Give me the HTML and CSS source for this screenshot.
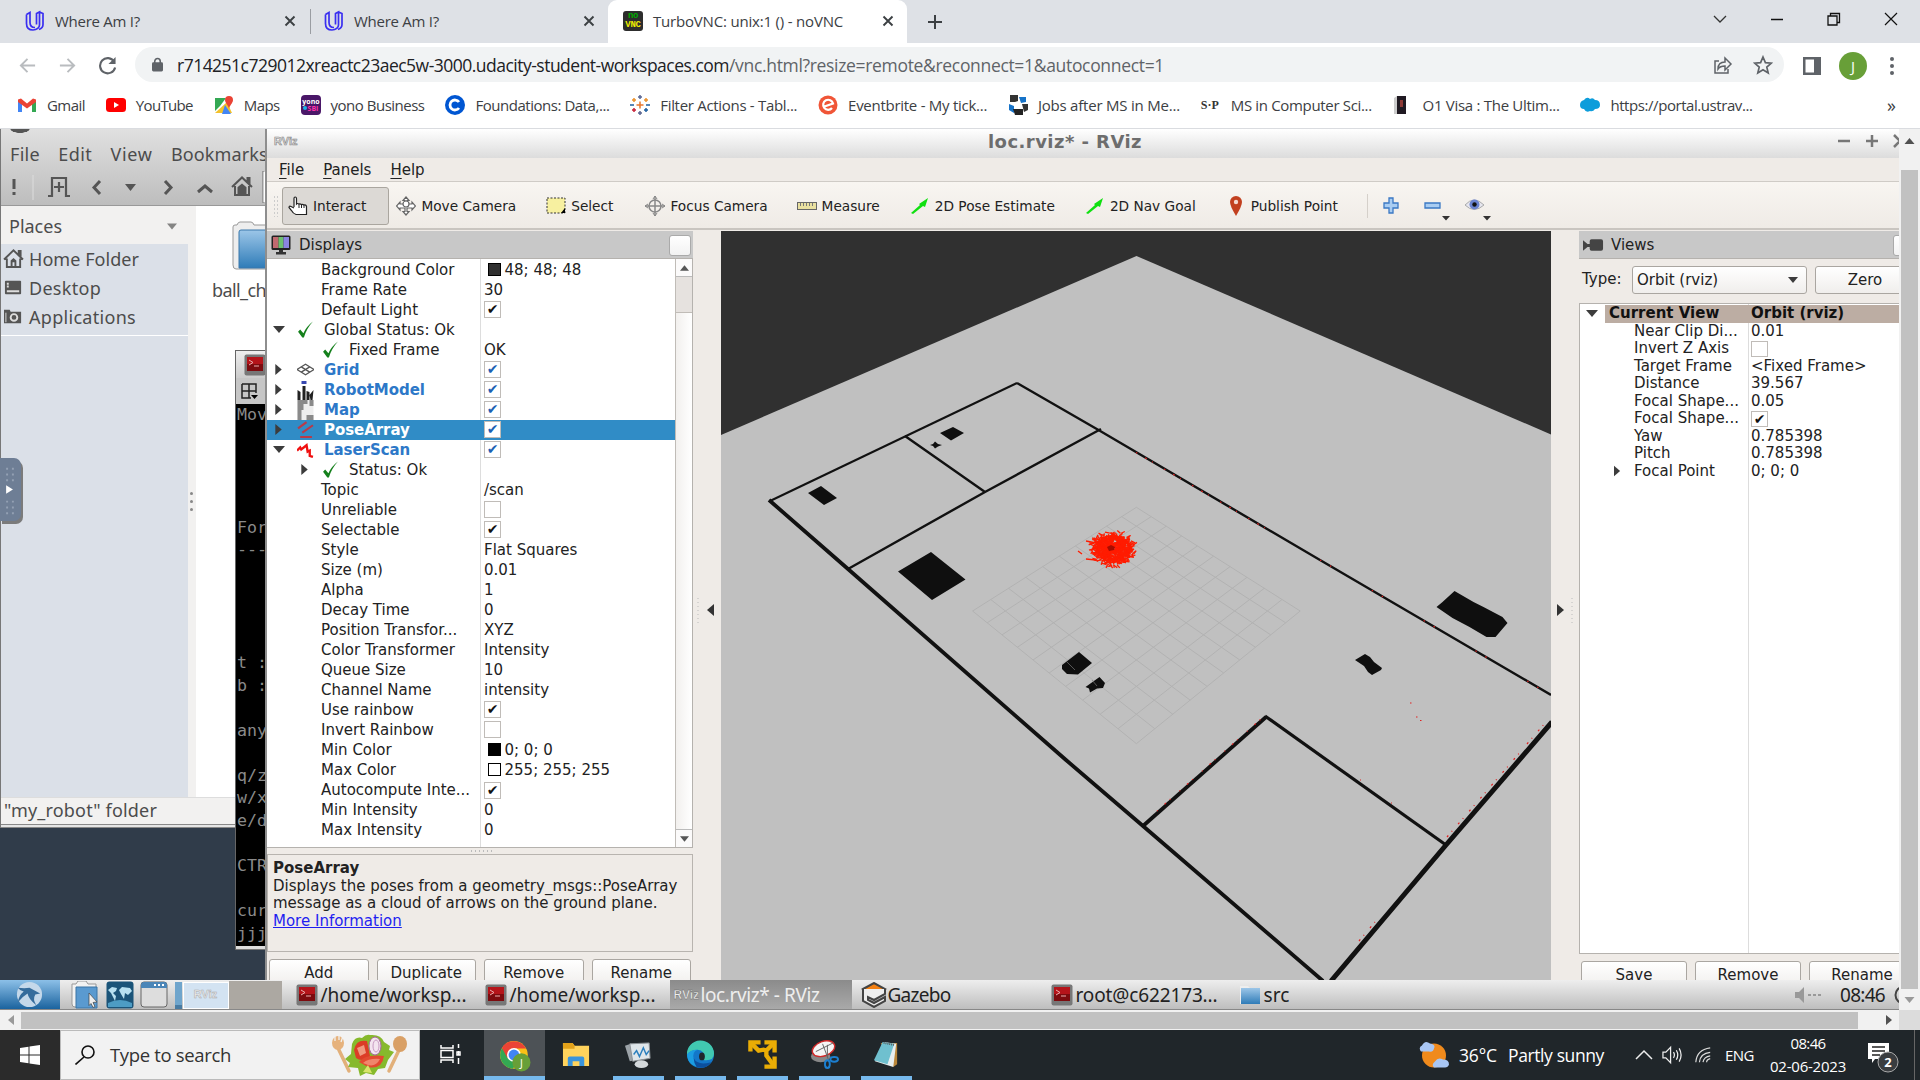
FILE: index.html
```html
<!DOCTYPE html>
<html lang="en">
<head>
<meta charset="utf-8">
<title>TurboVNC: unix:1 () - noVNC</title>
<link rel="stylesheet" href="styles.css">
</head>
<body>
<svg class="defs" width="0" height="0">
  <symbol id="uda" viewBox="0 0 20 22"><path d="M1.500 4.500v9c0 4 2.500 6.500 6.500 6.500s6.500-2.500 6.500-5V2L11.500 3.500v11M1.500 4.500L5 2.500v10c0 3.500 2 5 5 5M14.500 2l3.500 1.500v11c0 2-1 4-4 5" fill="none" stroke="#3a2ff0" stroke-width="1.700"/></symbol>
  <symbol id="x" viewBox="0 0 12 12"><path d="M1.500 1.500l9 9M10.500 1.500l-9 9" stroke="#3c4043" stroke-width="1.900"/></symbol>
  <symbol id="tick" viewBox="0 0 16 16"><path d="M1 10l2-2 3 3.500Q9 5 15 0.500 9 7 6.500 15.500H5Z" fill="#15801c"/></symbol>
  <symbol id="right" viewBox="0 0 8 12"><path d="M0 0l7 6-7 6z" fill="#3c3c3c"/></symbol>
  <symbol id="down" viewBox="0 0 12 7"><path d="M0 0h12l-6 7z" fill="#3c3c3c"/></symbol>
  <symbol id="home" viewBox="0 0 22 20"><path d="M1 11L11 1.500 21 11M4 10v9h14v-9M16.500 6V2h2v6" fill="none" stroke="#555" stroke-width="2"/><path d="M8 12l3-2.500 3 2.500v2H8zM8 14h2v4H8zM12 14h2v4h-2z" fill="#555"/></symbol>
  <symbol id="term" viewBox="0 0 22 22"><rect x=".5" y=".5" width="21" height="21" rx="2" fill="#777"/><rect x="3" y="3" width="16" height="14" fill="#b5141a"/><path d="M3 10h16v7H3z" fill="#7d0b0f"/><path d="M5 6l4 2.500L5 11M10 12h5" stroke="#e9b0b0" fill="none"/></symbol>
  <symbol id="folder" viewBox="0 0 34 50"><path d="M1 6q0-2 2-2h2q1-3 3-3h11q2 0 3 3h12v44H4q-3 0-3-4z" fill="#eee" stroke="#999"/><path d="M7 11q0-2 2-2h25v38H7z" fill="url(#fg)" stroke="#3a78ac"/></symbol>
  <linearGradient id="fg" x1="0" y1="0" x2="0" y2="1"><stop offset="0" stop-color="#9cc6e8"/><stop offset="1" stop-color="#2f7cb8"/></linearGradient>
  <symbol id="arrow2d" viewBox="0 0 20 20"><path d="M1 17L10 9 9 8l9-6-3 9-2-1L3 18z" fill="#10e010"/></symbol>
</svg>

<header class="tabs">
  <div class="tab"><svg class="fav"><use href="#uda"/></svg><span class="lbl" data-w="85">Where Am I?</span><svg class="close"><use href="#x"/></svg></div>
  <div class="tab bar"><svg class="fav"><use href="#uda"/></svg><span class="lbl" data-w="85">Where Am I?</span><svg class="close"><use href="#x"/></svg></div>
  <div class="tab active"><span class="novnc"><i>no</i><b>VNC</b></span><span class="lbl" data-w="190">TurboVNC: unix:1 () - noVNC</span><svg class="close"><use href="#x"/></svg></div>
  <svg class="plus" viewBox="0 0 16 16"><path d="M8 1v14M1 8h14" stroke="#3c4043" stroke-width="2"/></svg>
  <div class="winctl">
    <svg viewBox="0 0 14 14"><path d="M1 4l6 6 6-6" fill="none" stroke="#333" stroke-width="1.300"/></svg>
    <svg viewBox="0 0 14 14"><path d="M1 7.500h12" stroke="#111" stroke-width="1.500"/></svg>
    <svg viewBox="0 0 14 14"><path d="M1 4h9v9H1zM3.500 4V1.500h9v9H10" fill="none" stroke="#111" stroke-width="1.300"/></svg>
    <svg viewBox="0 0 14 14"><path d="M1 1l12 12M13 1L1 13" stroke="#111" stroke-width="1.200"/></svg>
  </div>
</header>
<nav class="toolbar">
  <svg class="nav" viewBox="0 0 20 20"><path d="M18 10H3M10 3l-7 7 7 7" fill="none" stroke="#b9bcbf" stroke-width="2"/></svg>
  <svg class="nav" viewBox="0 0 20 20"><path d="M2 10h15M10 3l7 7-7 7" fill="none" stroke="#b9bcbf" stroke-width="2"/></svg>
  <svg class="nav" viewBox="0 0 20 20"><path d="M17 6A8 8 0 1 0 18 12" fill="none" stroke="#5f6368" stroke-width="2.200"/><path d="M18.500 1v7.500H11z" fill="#5f6368"/></svg>
  <div class="omnibox">
    <svg class="lock" viewBox="0 0 12 15"><rect y="5" width="12" height="10" rx="1.500" fill="#5f6368"/><path d="M3 6V4a3 3 0 0 1 6 0v2" fill="none" stroke="#5f6368" stroke-width="1.700"/></svg>
    <span class="url host" data-w="552">r714251c729012xreactc23aec5w-3000.udacity-student-workspaces.com</span><span class="url" data-w="435">/vnc.html?resize=remote&amp;reconnect=1&amp;autoconnect=1</span>
    <svg class="share" viewBox="0 0 20 20"><path d="M6 6H2v12h13v-4M5 14c0-5 3-7 7-7V3l6 6-6 6v-4c-3 0-5 0-7 3z" fill="none" stroke="#5f6368" stroke-width="1.500"/></svg>
    <svg class="star" viewBox="0 0 20 20"><path d="M10 2l2.400 5.600 6 .5-4.600 4 1.400 5.900L10 14.800 4.800 18l1.400-5.900-4.600-4 6-.5z" fill="none" stroke="#5f6368" stroke-width="1.700"/></svg>
  </div>
  <svg class="side" viewBox="0 0 18 18"><path d="M0 0h18v18H0zM2.500 2.500v13H11v-13z" fill="#5f6368" fill-rule="evenodd"/></svg>
  <span class="avatar">J</span>
  <svg class="more" viewBox="0 0 4 18"><circle cx="2" cy="2" r="2"/><circle cx="2" cy="9" r="2"/><circle cx="2" cy="16" r="2"/></svg>
</nav>
<nav class="marks">
  <a><svg viewBox="0 0 20 20"><path d="M1 17V5l4 3v9z" fill="#4285f4"/><path d="M15 17V8l4-3v12z" fill="#34a853"/><path d="M1 4.500l3-1 6 5 6-5 3 1V7l-9 6.500L1 7z" fill="#ea4335"/></svg><span data-w="38">Gmail</span></a>
  <a><svg viewBox="0 0 20 20"><rect y="3" width="20" height="14" rx="3.500" fill="#f00"/><path d="M8 7l5 3-5 3z" fill="#fff"/></svg><span data-w="57">YouTube</span></a>
  <a><svg viewBox="0 0 20 20"><path d="M1 3h11l-6 8-5 5z" fill="#34a853"/><path d="M1 18L13 7l5 11z" fill="#f3c12c"/><path d="M11 10l6 9h-9z" fill="#4285f4"/><path d="M15 1a4 4 0 0 1 4 4c0 3-4 6-4 9 0-3-4-6-4-9a4 4 0 0 1 4-4z" fill="#ea4335"/></svg><span data-w="36">Maps</span></a>
  <a><svg viewBox="0 0 20 20"><rect width="20" height="20" rx="4" fill="#4a1768"/><text x="10" y="9" class="tiny" fill="#fff">yono</text><text x="12" y="16" class="tiny" fill="#f3a">SBI</text><circle cx="4" cy="13" r="2" fill="#1cb3e8"/></svg><span data-w="94">yono Business</span></a>
  <a><svg viewBox="0 0 20 20"><circle cx="10" cy="10" r="10" fill="#0056d2"/><path d="M14 7a5 5 0 1 0 0 6" fill="none" stroke="#fff" stroke-width="2.800"/></svg><span data-w="134">Foundations: Data,...</span></a>
  <a><svg viewBox="0 0 20 20" fill="none" stroke-width="1.500"><path d="M10 6.500v7M6.500 10h7" stroke="#e8762c"/><path d="M10 0v4M8 2h4M10 16v4M8 18h4" stroke="#5a6591"/><path d="M4 3v4M2 5h4M16 3v4M14 5h4" stroke="#eb912c"/><path d="M4 13v4M2 15h4" stroke="#c72037"/><path d="M16 13v4M14 15h4M0 10h4M16 10h4" stroke="#1f5fa0"/></svg><span data-w="137">Filter Actions - Tabl...</span></a>
  <a><svg viewBox="0 0 20 20"><circle cx="10" cy="10" r="9.500" fill="#f05537"/><path d="M5 12l10-3.500A5 5 0 1 0 14 13" fill="none" stroke="#fff" stroke-width="2.200"/></svg><span data-w="139">Eventbrite - My tick...</span></a>
  <a><svg viewBox="0 0 20 20"><path d="M2 0h8v6l-3 1H2z" fill="#333"/><path d="M11 2h7v5l-5 1z" fill="#1673c8"/><path d="M1 9l5 2v7l-5-3z" fill="#1673c8"/><path d="M14 9h6v6l-4 2z" fill="#333"/><path d="M5 14h10v6H7z" fill="#222"/></svg><span data-w="142">Jobs after MS in Me...</span></a>
  <a><span class="sp">S·P</span><span data-w="141">MS in Computer Sci...</span></a>
  <a><svg viewBox="0 0 20 20"><path d="M1 3l3-2v18H1z" fill="#ccc"/><path d="M4 1h9v18H4z" fill="#201a22"/><path d="M7 5h3v7H7z" fill="#8d3a36"/></svg><span data-w="137">O1 Visa : The Ultim...</span></a>
  <a><svg viewBox="0 0 20 20"><path d="M4 5q3-4 6-1 3-2 5 1 5 0 5 5 0 4-5 4-2 3-5 2-4 2-6-2-4 0-4-4 0-4 4-5z" fill="#0d9ddb"/></svg><span data-w="142">https://portal.ustrav...</span></a>
  <span class="over">»</span>
</nav>

<main class="vnc">
  <div class="desktop">
    <section class="fm">
      <div class="fm-top">
        <div class="fm-menu"><span data-w="30">File</span><span data-w="34">Edit</span><span data-w="42">View</span><span data-w="97">Bookmarks</span></div>
        <svg class="fm-tools" viewBox="0 0 266 39" fill="none" stroke="#555" stroke-width="3">
          <path d="M14 12v10M14 25v3"/><path d="M33 8v25" stroke="#ddd" stroke-width="1"/>
          <path d="M48 29h4V11h14v18h4M59 15v10M54 20h10" stroke-width="2.200"/>
          <path d="M100 14l-6 6.500 6 6.500M165 14l6 6.500-6 6.500M198 25l7-6 7 6"/><path d="M125 17h11l-5.500 7z" fill="#555" stroke="none"/>
          <use href="#home" x="231" y="9" width="22" height="20"/><path d="M263 4v32" stroke="#999" stroke-width="2"/><path d="M265 5v30" stroke="#fff"/></svg>
      </div>
      <div class="fm-mid">
        <aside class="places">
          <h4><span data-w="53">Places</span><svg class="pd"><use href="#down"/></svg></h4>
          <ul>
            <li><svg viewBox="0 0 22 20"><use href="#home" width="22" height="20"/></svg><span data-w="110">Home Folder</span></li>
            <li><svg viewBox="0 0 22 20"><rect x="2" y="3" width="17" height="14" rx="1" fill="#555"/><path d="M4 5h2v2H4zM4 8h2v2H4zM4 13h13v2H4z" fill="#ddd"/></svg><span data-w="72">Desktop</span></li>
            <li><svg viewBox="0 0 22 20"><path d="M1 16V3h6l1 2h11v12H1z" fill="#555"/><circle cx="11.500" cy="11" r="3.500" fill="none" stroke="#ddd" stroke-width="2"/><path d="M3 6v10" stroke="#ddd"/></svg><span data-w="107">Applications</span></li>
          </ul>
        </aside>
        <div class="fm-split"><i></i><i></i><i></i></div>
        <div class="files"><svg class="bigfolder"><use href="#folder"/></svg><span data-w="54">ball_ch</span></div>
      </div>
      <div class="fm-status"><span data-w="153">"my_robot" folder</span></div>
      <div class="fm-foot"></div>
    </section>

    <section class="terminal">
      <div class="t-title"><svg viewBox="0 0 22 22"><use href="#term" width="22" height="22"/></svg></div>
      <div class="t-bar"><svg viewBox="0 0 18 18"><path d="M1 1h14v9M1 1v14h9M8 1v14M1 8h14" fill="none" stroke="#222" stroke-width="1.500"/><path d="M10 12h7l-3.500 4z"/></svg></div>
      <pre>Mov




For
---




t :
b :

any

q/z
w/x
e/d

CTR

cur
jjj</pre>
      <div class="t-foot"></div>
    </section>

    <section class="rviz">
      <div class="r-title"><span class="logo">RViz</span><h1 data-w="154">loc.rviz* - RViz</h1><span class="r-ctl"><svg viewBox="0 0 80 20"><path d="M2 10h12M30 10h12M36 4v12M58 4l6 6-6 6" fill="none" stroke="#777" stroke-width="2.500"/></svg></span></div>
      <div class="r-menu"><span><u>F</u>ile</span><span><u>P</u>anels</span><span><u>H</u>elp</span></div>
      <div class="r-tools">
        <i class="grip"></i>
        <span class="tool on"><svg viewBox="0 0 20 20"><path d="M6 11V2.500q0-1.500 1.200-1.500T8.500 2.500V8q1-1 2.500 0 1-.5 2.500.5 1.200-.5 2.500.5 2-.5 2.500 1.500v8H8q-3-1-4.500-4L1 11.500q0-2 2-1L6 12" fill="#fff" stroke="#222" stroke-width="1.200"/><path d="M11 8v4M13.500 8.500V12M16 9v3" stroke="#222"/></svg>Interact</span>
        <span class="tool"><svg viewBox="0 0 20 20" fill="#fff" stroke="#666" stroke-width="1.200"><path d="M10 1l3 3.500h-2V8h5V6l3.500 4-3.500 4v-2h-5v3.500h2L10 19l-3-3.500h2V12H4v2L.5 10 4 6v2h5V4.500H7z"/><circle cx="10" cy="8" r="3"/></svg>Move Camera</span>
        <span class="tool"><svg viewBox="0 0 20 20"><rect x="1" y="2" width="18" height="15" fill="#f7f0a0" stroke="#333" stroke-dasharray="2 1.500"/><path d="M19 12v5h-4z"/></svg>Select</span>
        <span class="tool focus"><svg viewBox="0 0 20 20" fill="none" stroke="#888" stroke-width="1.500"><circle cx="10" cy="10" r="6"/><path d="M10 0v20M0 10h20"/><path d="M8 3l2-3 2 3M8 17l2 3 2-3M3 8l-3 2 3 2M17 8l3 2-3 2" stroke-width="1"/></svg>Focus Camera</span>
        <span class="tool"><svg viewBox="0 0 20 20"><rect x=".5" y="6.500" width="19" height="7" fill="#e9e0a0" stroke="#666"/><path d="M3.500 7v3M6.500 7v3M9.500 7v3M12.500 7v3M15.500 7v3" stroke="#777"/></svg>Measure</span>
        <span class="tool"><svg viewBox="0 0 20 20"><use href="#arrow2d" width="20" height="20"/></svg>2D Pose Estimate</span>
        <span class="tool"><svg viewBox="0 0 20 20"><use href="#arrow2d" width="20" height="20"/></svg>2D Nav Goal</span>
        <span class="tool"><svg viewBox="0 0 20 20"><path d="M10 0a6 6 0 0 1 6 6q0 4-6 14Q4 10 4 6a6 6 0 0 1 6-6z" fill="#c2401f"/><circle cx="10" cy="6" r="2.200" fill="#f3d9d0"/></svg>Publish Point</span>
        <i class="vsep"></i>
        <svg class="extras" viewBox="0 0 116 36"><path d="M6 10h4v5h5v5h-5v5H6v-5H1v-5h5zM42 15h15v5H42z" fill="#a9cdf2" stroke="#3a78c4" stroke-width="1.300"/><path d="M59 28h8l-4 4.500zM100 28h8l-4 4.500z" fill="#333"/><path d="M82 17q9-10 19 0-10 9-19 0z" fill="#e6e6ee" stroke="#aaa"/><circle cx="91.500" cy="16.500" r="5" fill="#6a83d0"/><circle cx="91.500" cy="16.500" r="2.200" fill="#111"/></svg>
      </div>
      <div class="r-body">
        <div class="dock">
          <div class="d-head"><svg viewBox="0 0 20 20"><rect x=".5" y=".5" width="19" height="14.500" rx="1.500" fill="#222"/><path d="M2 2h5.500v11H2z" fill="#c06a70"/><path d="M7.500 2h5v11h-5z" fill="#6cc070"/><path d="M12.500 2H18v11h-5.500z" fill="#8a84e0"/><path d="M8 15h4v2h3v2.500H5V17h3z" fill="#333"/></svg>Displays<i class="sq"></i></div>
          <div class="treebox">
            <div class="tree">
              <p class="l1">Background Color<b><s class="dk"></s>48; 48; 48</b></p>
              <p class="l1">Frame Rate<b>30</b></p>
              <p class="l1">Default Light<b><i class="cb on">✔</i></b></p>
              <p class="top"><svg class="ar"><use href="#down"/></svg><svg class="ic"><use href="#tick"/></svg>Global Status: Ok<b></b></p>
              <p class="sub"><svg class="ar"></svg><svg class="ic"><use href="#tick"/></svg>Fixed Frame<b>OK</b></p>
              <p class="top d"><svg class="ar"><use href="#right"/></svg><svg class="ic" viewBox="0 0 16 16"><path d="M0 8l8-5 8 5-8 5zM4 5.500l8 5M12 5.500l-8 5" fill="none" stroke="#555" stroke-width="1.200"/></svg>Grid<b><i class="cb on bl">✔</i></b></p>
              <p class="top d"><svg class="ar"><use href="#right"/></svg><svg class="ic tall" viewBox="0 0 16 20"><path d="M4 1h5v3H4z" fill="#3848b0"/><path d="M0 10l3 2v8H0zM5 6h3v14H5zM9 11l3 1v8H9zM12 15l4-5-1 10h-2z" fill="#222"/></svg>RobotModel<b><i class="cb on bl">✔</i></b></p>
              <p class="top d"><svg class="ar"><use href="#right"/></svg><svg class="ic tall" viewBox="0 0 16 20"><path d="M0 0h16v20H0z" fill="#eee"/><path d="M0 0h10v4H6v6H4v10H0zM9 15h7v5H9zM12 0h4v6h-4z" fill="#8a8a8a"/></svg>Map<b><i class="cb on bl">✔</i></b></p>
              <p class="top d sel"><svg class="ar"><use href="#right"/></svg><svg class="ic" viewBox="0 0 16 16"><path d="M1 7l8-6M5 11l10-7M3 15h11" stroke="#b83a48" stroke-width="2"/></svg>PoseArray<b><i class="cb on bl">✔</i></b></p>
              <p class="top d"><svg class="ar"><use href="#down"/></svg><svg class="ic" viewBox="0 0 16 16"><path d="M0 9l3-3 1 2 5-4 1 6 2-1v5l3 1" fill="none" stroke="#f01010" stroke-width="2.200"/></svg>LaserScan<b><i class="cb on bl">✔</i></b></p>
              <p class="sub"><svg class="ar"><use href="#right"/></svg><svg class="ic"><use href="#tick"/></svg>Status: Ok<b></b></p>
              <p class="l1">Topic<b>/scan</b></p>
              <p class="l1">Unreliable<b><i class="cb"></i></b></p>
              <p class="l1">Selectable<b><i class="cb on">✔</i></b></p>
              <p class="l1">Style<b>Flat Squares</b></p>
              <p class="l1">Size (m)<b>0.01</b></p>
              <p class="l1">Alpha<b>1</b></p>
              <p class="l1">Decay Time<b>0</b></p>
              <p class="l1">Position Transfor...<b>XYZ</b></p>
              <p class="l1">Color Transformer<b>Intensity</b></p>
              <p class="l1">Queue Size<b>10</b></p>
              <p class="l1">Channel Name<b>intensity</b></p>
              <p class="l1">Use rainbow<b><i class="cb on">✔</i></b></p>
              <p class="l1">Invert Rainbow<b><i class="cb"></i></b></p>
              <p class="l1">Min Color<b><s class="bk"></s>0; 0; 0</b></p>
              <p class="l1">Max Color<b><s></s>255; 255; 255</b></p>
              <p class="l1">Autocompute Inte...<b><i class="cb on">✔</i></b></p>
              <p class="l1">Min Intensity<b>0</b></p>
              <p class="l1">Max Intensity<b>0</b></p>
            </div>
            <div class="tscroll"><span><svg viewBox="0 0 10 6"><path d="M0 6l5-6 5 6z" fill="#555"/></svg></span><em></em><span class="dn"><svg viewBox="0 0 10 6"><path d="M0 0l5 6 5-6z" fill="#555"/></svg></span></div>
          </div>
          <div class="hdots"></div>
          <div class="desc"><strong>PoseArray</strong><br>Displays the poses from a geometry_msgs::PoseArray<br>message as a cloud of arrows on the ground plane.<br><a>More Information</a></div>
          <div class="btns"><span>Add</span><span>Duplicate</span><span>Remove</span><span>Rename</span></div>
        </div>
        <div class="gut"><svg viewBox="0 0 28 40"><path d="M5 8v26" stroke="#bbb" stroke-dasharray="1 3"/><path d="M21 14v12l-7-6z" fill="#333"/></svg></div>
        <svg class="view3d" viewBox="721 231 830 749">
          <rect x="721" y="231" width="830" height="749" fill="#303030"/>
          <path d="M721 435L1136.500 256 1551 434.500V980H721z" fill="#c0c0c0"/>
          <g id="grid" stroke="#b2b2b2" stroke-width="1"></g>
          <g fill="none" stroke="#111">
            <path d="M770 501L1017 383" stroke-width="2"/>
            <path d="M1017 383l81.500 47L1320 560l231 135" stroke-width="2.400"/>
            <path d="M905 436l80 56M1101 429L985 492 848 569" stroke-width="2.400"/>
            <path d="M769 500l79 69 218 191 77 66 180 155" stroke-width="3.800"/>
            <path d="M1143 826l123-109" stroke-width="3.800"/><path d="M1265 716l181 129" stroke-width="3.200"/>
            <path d="M1331 981l115-136 106-123" stroke-width="5"/>
          </g>
          <g fill="#0f0f0f">
            <path d="M940 433l13-6 11 6-13 7.500zM930 445l3-1 2-2.500 3 2.500 4 1-4 1.500-3 2-2-2.500zM808 493l13-7 16 12-13 7zM898 571.500L931 552l34.500 27.500L932 600zM1062 665l17-13 13 11-14 11.500-11-.5-5-5zM1085.500 687l14-10 5.500 6-2 5-6 .5-7 4-1-4z"/>
            <path d="M1436.500 607l6-5 12-11 19 11 10 5 19 10 5 6-12 14h-9l-17-10-17-9zM1355 660l10-6 5 3 4 5 8 6-1 2-9 5-4-3-4-6z"/>
          </g>
          <path d="M1066 661l9 9M1092 680l5 6" stroke="#777" fill="none" stroke-width=".7"/>
          <g id="poses" stroke="#ff1c00" stroke-width="1.300"></g>
          <path d="M1107 547l4-2 4 2-1 3-5 1z" fill="#a80c00"/>
          <g fill="none" stroke="#e02020" stroke-width="1.200">
            <path d="M1136 452.500L1270 531" stroke-dasharray="1.500 9 2 6 1 13"/><path d="M1320 560L1551 695" stroke-dasharray="1.500 10 1.500 47"/><path d="M1157 811l104-92" stroke-dasharray="1 9 2 5 1 12"/>
            <path d="M1360 942l16-19M1448 838l75-87M1528 745l18-21" stroke-dasharray="2 5 1 9" transform="translate(-1 -1)"/>
            <path d="M1410 703h1.500M1416 717h1.500M1420 720.500h1.500M1360 780h1M1391 803h1"/>
          </g>
        </svg>
        <div class="gut"><svg viewBox="0 0 28 40"><path d="M6 14v12l7-6z" fill="#333"/><path d="M21 8v26" stroke="#bbb" stroke-dasharray="1 3"/></svg></div>
        <div class="views">
          <div class="d-head"><svg viewBox="0 0 22 20"><path d="M0 5l6 5v1l-6 5zM5 9h3v3H5zM7 6q0-2 2-2h10q2 0 2 2v8q0 2-2 2H9q-2 0-2-2z" fill="#444"/></svg>Views<i class="sq"></i></div>
          <div class="typerow"><span>Type:</span><span class="combo">Orbit (rviz)<svg class="cd"><use href="#down"/></svg></span><span class="zero">Zero</span></div>
          <div class="vtree">
            <p class="cur"><svg class="ar"><use href="#down"/></svg><strong>Current View</strong><b>Orbit (rviz)</b></p>
            <p>Near Clip Di...<b>0.01</b></p>
            <p>Invert Z Axis<b><i class="cb"></i></b></p>
            <p>Target Frame<b>&lt;Fixed Frame&gt;</b></p>
            <p>Distance<b>39.567</b></p>
            <p>Focal Shape...<b>0.05</b></p>
            <p>Focal Shape...<b><i class="cb on">✔</i></b></p>
            <p>Yaw<b>0.785398</b></p>
            <p>Pitch<b>0.785398</b></p>
            <p class="exp"><svg class="ar"><use href="#right"/></svg>Focal Point<b>0; 0; 0</b></p>
          </div>
          <div class="btns"><span>Save</span><span>Remove</span><span>Rename</span></div>
        </div>
      </div>
    </section>

    <div class="handle"><svg viewBox="0 0 20 65"><path d="M7 10v15M13 10v15M7 44v15M13 44v15" stroke="#93a0b3" stroke-width="2" stroke-dasharray="2 4"/><path d="M6 28l7 4.500L6 37z" fill="#fff"/></svg></div>

    <footer class="lx">
      <span class="lxstart"><svg viewBox="0 0 30 30"><circle cx="15" cy="15" r="13" fill="#c4d8ea"/><path d="M3 8q7 1 12 0l11 6-5 1q-3 5 1 11-8-6-9-12-5 3-10 9 1-7 6-11-4-1-6-4z" fill="#356c9c"/></svg></span>
      <svg class="lxi" viewBox="0 0 28 28"><path d="M1 3h4l2-3h8l2 3h8v23H4q-3 0-3-3z" fill="#f2f2f2" stroke="#999"/><path d="M5 6h21v21H5z" fill="#5a9ad0" stroke="#3b74a5"/><path d="M18 12l8 9-4 .5 2 4-2 1-2-4-2 2z" fill="#eee" stroke="#444" stroke-width=".7"/></svg>
      <svg class="lxi" viewBox="0 0 28 28"><rect x=".5" y=".5" width="27" height="27" rx="3" fill="#1b5479"/><path d="M2 22q12-6 24 0v4H2z" fill="#4d9cc4"/><path d="M2 9l4-3 5 1-1 3-3 2 3 3-1 5-2-4-2-4zM13 9l3-3 8 1 2 3-4 4-3-2-1 6-3-5z" fill="#b8e0f0"/></svg>
      <svg class="lxi" viewBox="0 0 28 28"><rect x="1" y="1" width="26" height="25" rx="3" fill="#ddd" stroke="#666"/><path d="M1 7V4q0-3 3-3h20q3 0 3 3v3z" fill="#4b86b8"/><path d="M14 4h2M18 4h2M22 4h2" stroke="#fff" stroke-width="2"/></svg>
      <span class="pager"><i></i><em>RViz</em></span><span class="pager2"></span>
      <span class="task t1"><svg><use href="#term"/></svg><span data-w="146">/home/worksp...</span></span>
      <span class="task t2"><svg><use href="#term"/></svg><span data-w="146">/home/worksp...</span></span>
      <span class="task act"><em>RViz</em><span data-w="119">loc.rviz* - RViz</span></span>
      <span class="task t4"><svg viewBox="0 0 26 26"><path d="M2 7l11-6 11 6-11 6z" fill="#f58113" stroke="#444" stroke-width="2"/><path d="M2 7v12l11 6 11-6v-4l-11 6-6-3v-3l6 3 11-6v-5" fill="#eee" stroke="#444" stroke-width="2"/></svg><span data-w="63">Gazebo</span></span>
      <span class="task t5"><svg><use href="#term"/></svg><span data-w="142">root@c622173...</span></span>
      <span class="task t6"><svg viewBox="0 0 22 22"><path d="M1 2h8l2 2h10v16H1z" fill="#eee"/><rect x="2" y="4" width="19" height="16" fill="url(#fg)"/></svg><span data-w="26">src</span></span>
      <span class="tray"><svg viewBox="0 0 27 20"><path d="M0 7h4l5-5v16l-5-5H0z" fill="#999"/><path d="M13 10h13" stroke="#999" stroke-width="2" stroke-dasharray="3 2"/></svg><span data-w="45">08:46</span><svg class="pw" viewBox="0 0 20 20"><circle cx="10" cy="10" r="8.500" fill="none" stroke="#444" stroke-width="2"/></svg></span>
    </footer>
  </div>
  <div class="vbar"><span><svg viewBox="0 0 10 6"><path d="M0 6l5-6 5 6z" fill="#505050"/></svg></span><i></i><span class="e"><svg viewBox="0 0 10 6"><path d="M0 0l5 6 5-6z" fill="#999"/></svg></span></div>
</main>
<div class="hbar"><span class="a"><svg viewBox="0 0 6 10"><path d="M6 0v10L0 5z" fill="#999"/></svg></span><i></i><span class="z"><svg viewBox="0 0 6 10"><path d="M0 0v10l6-5z" fill="#505050"/></svg></span><em></em></div>

<footer class="win">
  <span class="start"><svg viewBox="0 0 20 20"><path d="M0 3l8.500-1.200V9.500H0zM9.500 1.600L20 0v9.500H9.500zM0 10.500h8.500v7.700L0 17zM9.500 10.500H20V20L9.500 18.400z" fill="#fff"/></svg></span>
  <span class="search"><svg class="mag" viewBox="0 0 20 20"><circle cx="13" cy="7" r="6" fill="none" stroke="#111" stroke-width="1.600"/><path d="M9 12l-8.500 7.500" stroke="#111" stroke-width="1.600"/></svg><span class="q" data-w="121">Type to search</span>
    <svg class="food" viewBox="0 0 78 42"><path d="M8 14l11 23M70 14L59 37" stroke="#e2b07a" stroke-width="3.500" stroke-linecap="round"/><ellipse cx="8" cy="9" rx="6" ry="7" fill="#e6b27c"/><path d="M5 1v6M9 0v6M13 2l-2 6" stroke="#f2f2f2" stroke-width="1.300"/><ellipse cx="70" cy="10" rx="7" ry="8" fill="#d9a066"/><path d="M22 10q3-8 10-6 4-4 8-3 11-1 14 7l6 4-1 4 5 2-6 8-3 8-7 1-4 6-8-2-6 3-2-8-10-1 2-4-5-4 6-5z" fill="#86b92c"/><path d="M24 16q2-11 13-9l3 15q-7 7-14 2z" fill="#dc3c26"/><path d="M29 28q6-8 25-6-2 14-16 11z" fill="#e24a30"/><path d="M33 29q6-5 17-4-4 8-12 6z" fill="#f0866c"/><ellipse cx="45" cy="12" rx="6" ry="9" fill="#f3e4f0" stroke="#a766a0"/><ellipse cx="46" cy="12" rx="3" ry="6" fill="none" stroke="#c79ac2"/><path d="M27 14l7-3 2 8-6 3z" fill="#f09a80"/><path d="M33 38l5-7 4 8z" fill="#d8e46c"/></svg></span>
  <span class="ap tv"><svg viewBox="0 0 22 22" fill="none" stroke="#fff" stroke-width="1.500"><path d="M1 2v3h12V2M1 20v-3h12v3M1 7.500h12v7H1zM18.500 1v4M18.500 8v4M18.500 15v6"/><path d="M17 9h3v3h-3z"/></svg></span>
  <span class="ap hot run"><svg viewBox="0 0 30 30"><circle cx="14" cy="14" r="13" fill="#fbc116"/><path d="M2.800 7.500A13 13 0 0 0 13 27l6-9-8-1z" fill="#34a853"/><path d="M2.800 7.500L8 17l6-9h11.500A13 13 0 0 0 2.800 7.500z" fill="#ea4335"/><circle cx="14" cy="14" r="6.500" fill="#fff"/><circle cx="14" cy="14" r="5" fill="#4285f4"/><circle cx="21" cy="21" r="8.500" fill="#689f38"/><text x="21" y="25" class="jj">J</text></svg></span>
  <span class="ap"><svg viewBox="0 0 30 30"><path d="M1 3h10l2 3h15v21H1z" fill="#ffd35c"/><path d="M1 3h10l2 3v3H1z" fill="#e3a21a"/><path d="M6 27v-8q0-2 2-2h13q2 0 2 2v8h-5v-5h-7v5z" fill="#3a94dc"/></svg></span>
  <span class="ap run"><svg viewBox="0 0 30 30"><path d="M1 6l6-2 4 17-5 1z" fill="#9ca3a8"/><path d="M6 4l20-1 1 16-18 3z" fill="#dfe6ea" stroke="#8a9094"/><path d="M10 15l3-4 3 6 4-9 3 7 3-4" fill="none" stroke="#2a7fbe" stroke-width="1.500"/><ellipse cx="18" cy="25" rx="7" ry="4" fill="#d4d9dc"/></svg></span>
  <span class="ap run"><svg viewBox="0 0 30 30"><circle cx="15" cy="15" r="14" fill="#1377c9"/><path d="M1 15A14 14 0 0 1 29 14q0 7-8 7-4 0-3-3 2-7-6-8-7 0-11 5z" fill="#41c8b0"/><path d="M12 10q-6 2-4 10 2 6 8 8-14 0-15-13 3-5 11-5z" fill="#1b9de2"/><path d="M8 19q4 8 18 4-6 8-15 5-3-4-3-9z" fill="#0c4f9e"/><ellipse cx="16.500" cy="17" rx="3" ry="4" fill="#20252a"/></svg></span>
  <span class="ap run"><svg viewBox="0 0 30 30" fill="none" stroke="#eaad05" stroke-width="4.500"><path d="M2.500 12V2.500H13M17 2.500h10.500V13M27.500 17v10.500H17"/><path d="M3 3l8 8 5-1 3 1 8-8M19 11v5l8 11"/></svg></span>
  <span class="ap run"><svg viewBox="0 0 30 30"><ellipse cx="11" cy="17" rx="10" ry="6" fill="#888"/><ellipse cx="14" cy="9" rx="12" ry="7.500" transform="rotate(-20 14 9)" fill="#f6f6f6" stroke="#cf2a2a" stroke-width="1.500"/><path d="M6 12l18-9M13 4l6 16M18 5v14" stroke="#666"/><g fill="none" stroke="#1c7fd0" stroke-width="2"><ellipse cx="25" cy="20" rx="4" ry="2.500"/><ellipse cx="18" cy="25" rx="2.500" ry="4"/></g></svg></span>
  <span class="ap run"><svg viewBox="0 0 30 30"><path d="M9 3h17v22l-4 3z" fill="#b9863a"/><path d="M12 2l13 2-3 24-19-6z" fill="#e7eef0"/><path d="M11 2l12 2-7 21-14-4z" fill="#6fc0cf"/><path d="M12 3l11 2" stroke="#555" stroke-width="2" stroke-dasharray="1 1"/></svg></span>
  <span class="weather"><svg viewBox="0 0 30 28"><circle cx="15" cy="14" r="12" fill="#f08a1c"/><path d="M2 10q-3-4 1-6 3-6 8-2 6 1 4 5-1 4-5 3zM15 26q-3-3 1-6 3-5 8-2 6 0 6 5-1 3-4 3z" fill="#a8c6f4"/></svg><span data-w="38">36°C</span><span data-w="96">Partly sunny</span></span>
  <span class="sys">
    <svg viewBox="0 0 20 20"><path d="M2 14l8-8 8 8" fill="none" stroke="#eee" stroke-width="1.500"/></svg>
    <svg class="sp2" viewBox="0 0 22 20" fill="none" stroke="#eee" stroke-width="1.300"><path d="M1 7h3l5-5v16l-5-5H1zM12 7q2 3 0 6M15 5q3 5 0 10M18 3q4 7 0 14"/></svg>
    <svg class="wf" viewBox="0 0 20 20" fill="none" stroke="#ddd" stroke-width="1.300"><path d="M2 18Q3 4 18 2M6 18Q7 8 18 7M10 18q1-6 8-7M14 18q0-3 4-4"/></svg>
    <span class="eng" data-w="29">ENG</span>
    <span class="clock"><span data-w="35">08:46</span><span data-w="76">02-06-2023</span></span>
    <svg class="note" viewBox="0 0 32 32"><path d="M0 2h21v16H7l-3 4v-4H0z" fill="#fff"/><path d="M4 6h13M4 10h13M4 14h8" stroke="#222" stroke-width="1.500"/><circle cx="20" cy="21" r="10" fill="#3a3d40" stroke="#aaa"/><text x="20" y="26" class="nn">2</text></svg>
    <i class="peek"></i>
  </span>
</footer>
<script src="app.js"></script>
</body>
</html>
```
FILE: styles.css
```css
* { box-sizing: border-box; }
body { margin: 0; width: 1920px; height: 1080px; overflow: hidden; font-family: "Open Sans", "Noto Sans", sans-serif; font-size: 15px; color: #3c4043; display: flex; flex-direction: column; background: #fff; }
svg { display: block; flex: none; }
.defs { position: absolute; }
[data-w] { white-space: nowrap; display: block; flex: none; }
p, h1, h4, ul, pre { margin: 0; padding: 0; font-weight: normal; }

.tabs { height: 43px; flex: none; background: #dee1e6; display: flex; align-items: center; }
.tab { width: 299px; height: 43px; padding: 0 3px 2px 25px; display: flex; align-items: center; gap: 10px; }
.tab.active { margin-left: 10px; padding: 0 13px 2px 15px; background: #fff; border-radius: 9px 9px 0 0; }
.tab .fav { width: 20px; height: 22px; }
.tab .close { width: 12px; height: 12px; margin-left: auto; }
.tab.bar { background: linear-gradient(#9a9da2, #9a9da2) 11px 9px / 1px 25px no-repeat; }
.novnc { width: 20px; height: 20px; background: #2d2d2d; border-radius: 3px; font: bold 9px/9px "Liberation Mono", monospace; display: flex; flex-direction: column; align-items: center; padding-top: 1px; letter-spacing: -.3px; }
.novnc i { font-style: normal; color: #0a0; }
.novnc b { color: #ee0; }
.plus { width: 16px; height: 16px; margin-left: 20px; }
.winctl { margin-left: auto; display: flex; gap: 43px; padding: 0 22px 6px 0; }
.winctl svg { width: 14px; height: 14px; }

.toolbar { height: 43px; flex: none; display: flex; align-items: center; padding: 3px 25px 1px 18px; }
.nav { width: 19px; height: 19px; margin-right: 21px; }
.nav:nth-child(3) { margin-right: 18px; }
.omnibox { width: 1649px; height: 35px; margin-top: -2px; background: #f1f3f4; border-radius: 18px; display: flex; align-items: center; padding: 0 11px 0 17px; }
.lock { width: 11px; height: 15px; margin-right: 14px; }
.url { font-size: 17.500px; color: #5f6368; line-height: 34px; }
.url.host { color: #202124; }
.share { width: 20px; height: 20px; margin-left: auto; }
.star { width: 20px; height: 20px; margin-left: 20px; }
.side { width: 18px; height: 18px; margin-left: 19px; }
.avatar { width: 28px; height: 28px; border-radius: 50%; background: #689f38; color: #fff; text-align: center; line-height: 28px; font-size: 15px; margin-left: 18px; }
.more { width: 4px; height: 18px; fill: #5f6368; margin-left: 23px; }

.marks { height: 43px; flex: none; display: flex; align-items: center; gap: 20.850px; padding: 0 24px 4px 17px; border-bottom: 1px solid #dadce0; }
.marks a { display: flex; align-items: center; gap: 10px; }
.marks svg { width: 20px; height: 20px; }
.tiny { font-size: 7px; font-weight: bold; text-anchor: middle; }
.sp { width: 20px; font: bold 12px "Liberation Serif", serif; white-space: nowrap; color: #333; }
.over { margin-left: auto; font-size: 18px; }

.vnc { height: 881px; flex: none; display: flex; }
.desktop { width: 1899px; height: 881px; position: relative; overflow: hidden; background: #303c4a; }
.vbar { width: 21px; background: #f1f1f1; display: flex; flex-direction: column; align-items: center; }
.vbar span { height: 41px; padding-top: 9px; }
.vbar svg { width: 11px; height: 6px; }
.vbar i { width: 17px; height: 819px; background: #c1c1c1; }
.vbar .e { height: 21px; padding-top: 8px; }
.hbar { height: 20px; flex: none; background: #f1f1f1; display: flex; align-items: center; }
.hbar svg { width: 6px; height: 10px; }
.hbar .a { width: 21px; padding-left: 8px; }
.hbar i { width: 1837px; height: 17px; background: #c1c1c1; }
.hbar .z { width: 41px; padding-left: 28px; }
.hbar em { width: 21px; height: 20px; background: #dcdcdc; }

.fm { position: absolute; left: 0; top: 0; width: 267px; height: 699px; border-left: 1px solid #777; display: flex; flex-direction: column; color: #4c4c4c; font-size: 18px; font-family: "Noto Sans", sans-serif; }
.fm-top { height: 77px; flex: none; background: radial-gradient(ellipse 10px 4px at 19px 0, #555 90%, transparent) no-repeat, linear-gradient(#e0e0e0, #bdbdbd); border-bottom: 1px solid #999; }
.fm-menu { height: 36px; padding: 13px 0 0 9px; display: flex; gap: 18.300px; line-height: 24px; }
.fm-tools { width: 266px; height: 39px; margin-top: 2px; margin-left: -1px; }
.fm-mid { display: flex; height: 591px; flex: none; background: #fff; }
.places { width: 187px; background: #dbe0e8; }
.places h4 { height: 38px; background: #f2f1f0; display: flex; align-items: center; padding: 2px 11px 0 8px; justify-content: space-between; }
.pd { width: 10px; height: 7px; opacity: .6; }
.places ul { list-style: none; border-bottom: 1px solid #fff; height: 92px; padding-left: 3px; }
.places li { height: 29px; display: flex; align-items: center; gap: 4px; }
.places li svg { width: 21px; height: 19px; margin-left: -1px; }
.places li span { margin-left: 1px; }
.fm-split { width: 8px; background: #f2f1f0; padding: 286px 0 0 2px; display: flex; flex-direction: column; gap: 5px; }
.fm-split i { width: 3px; height: 3px; border-radius: 2px; background: #888; }
.files { padding: 15px 0 0 16px; display: flex; flex-direction: column; gap: 7px; width: 71px; }
.bigfolder { width: 34px; height: 50px; margin-left: 20px; }
.fm-status { height: 27px; flex: none; background: #f2f1f0; padding-left: 3px; line-height: 25px; border-top: 1px solid #ddd; }
.fm-foot { height: 4px; background: #e5e5e5; border-top: 1px solid #888; border-bottom: 1px solid #888; }

.terminal { position: absolute; left: 235px; top: 221px; width: 60px; height: 600px; background: #000; border-left: 1px solid #666; border-top: 1px solid #666; display: flex; flex-direction: column; }
.t-title { height: 27px; flex: none; background: linear-gradient(#eee, #ccc); padding: 3px 0 0 8px; }
.t-title svg { width: 22px; height: 22px; }
.t-bar { height: 26px; flex: none; background: #c6c6c6; padding: 5px 0 0 5px; }
.t-bar svg { width: 18px; height: 18px; }
.terminal pre { flex: 1; padding: 0 0 0 1px; font: 16.600px/22.550px "DejaVu Sans Mono", monospace; color: #8a8a8a; overflow: hidden; }
.t-foot { height: 4px; flex: none; background: #ddd; border-bottom: 1px solid #777; }

.rviz { position: absolute; left: 265px; top: 0; width: 1650px; height: 860px; background: #efebe7; border-left: 2px solid #8e8e8e; font: 15px "DejaVu Sans", sans-serif; color: #222; display: flex; flex-direction: column; }
.r-title { height: 29px; flex: none; background: linear-gradient(#fff, #dcdcdc); display: flex; align-items: center; }
.logo { font: bold 11px "Liberation Sans"; color: #ddd; -webkit-text-stroke: .6px #888; width: 22px; margin: -6px 0 0 7px; }
.r-title h1 { font-weight: bold; font-size: 18px; color: #6d6d6d; margin: -4px 0 0 692px; }
.r-ctl { margin: -6px 0 0 694px; }
.r-ctl svg { width: 80px; height: 20px; }
.r-menu { height: 24px; flex: none; display: flex; gap: 19px; padding: 2px 0 0 12px; border-bottom: 1px solid #cfcbc6; line-height: 20px; }
.r-menu u { text-underline-offset: 3px; }
.r-tools { height: 48px; flex: none; background: linear-gradient(#f8f5f1, #efebe6); border-bottom: 2px solid #c9c5c0; display: flex; align-items: center; gap: 3px; padding: 2px 0 0 6px; font-size: 13.700px; }
.grip { width: 6px; height: 22px; margin-right: 1px; background: radial-gradient(#ccc 1px, transparent 1px) 0 0 / 3px 4px; }
.tool { display: flex; align-items: center; gap: 5px; height: 38px; padding: 0 22px 0 5px; white-space: nowrap; border: 1px solid transparent; margin: 0 -1px; }
.tool.focus { margin-left: 1px; margin-right: -2px; }
.tool svg { width: 20px; height: 20px; }
.tool.on { background: #dcd9d5; border-color: #aaa69f; border-radius: 3px; }
.vsep { width: 1px; height: 24px; background: #d5d0ca; margin-left: 4px; }
.extras { width: 116px; height: 36px; margin-left: 12px; }
.r-body { height: 749px; flex: none; display: flex; margin-top: 1px; }
.dock { width: 426px; display: flex; flex-direction: column; }
.dock > div { flex: none; }
.d-head { height: 28px; flex: none; background: #c8c8c8; display: flex; align-items: center; padding: 1px 2px 0 4px; gap: 8px; border-bottom: 1px solid #b5b2ae; }
.d-head svg { width: 20px; height: 20px; }
.sq { width: 22px; height: 21px; margin-left: auto; background: linear-gradient(#fff, #f2f2f2); border: 1px solid #aaa; border-radius: 3px; }
.treebox { height: 589px; display: flex; background: #fff; border: 1px solid #b5b2ae; border-top: 0; border-left: 0; }
.tree { width: 408px; padding-top: .6px; background: linear-gradient(#ddd, #ddd) 213px 0 / 1px 100% no-repeat; }
.tree p { height: 20.020px; line-height: 20px; display: flex; align-items: center; white-space: pre; position: relative; }
.tree p.l1 { padding-left: 54px; }
.tree p.top { padding-left: 6px; }
.tree p.sub { padding-left: 32px; }
.ar { width: 12px; height: 12px; flex: none; }
.top .ar, .sub .ar { width: 12px; height: 11px; margin-right: 12px; }
.tree .sub .ar { margin-right: 11px; }
.ic { width: 17px; height: 17px; margin-right: 10px; }
.ic.tall { height: 20px; }
.tree p.d { color: #2d78c8; font-weight: bold; letter-spacing: -.05px; }
.tree p.sel { background: #308cc6; color: #fff; }
.tree b, .vtree b { font-weight: normal; position: absolute; left: 217px; display: flex; align-items: center; height: 20px; }
.cb { width: 17px; height: 17px; border: 1px solid #c0bcb8; background: #fff; color: #111; font: normal 14px/15px "DejaVu Sans"; text-align: center; }
.cb.bl { color: #1c62b4; }
.tree s { width: 13px; height: 13px; margin: 0 4px 0 3.500px; border: 1.500px solid #000; background: #fff; }
.tree s.dk { background: #303030; }
.tree s.bk { background: #000; }
.tscroll { width: 17px; border-left: 1px solid #c0bcb7; background: linear-gradient(90deg, #f2f0ee, #fff); display: flex; flex-direction: column; }
.tscroll span { height: 18px; display: flex; align-items: center; justify-content: center; background: #fbfafa; border-bottom: 1px solid #bbb; }
.tscroll svg { width: 9px; height: 6px; }
.tscroll em { height: 36px; background: #e6e2df; border-bottom: 1px solid #c0bcb7; }
.tscroll .dn { margin-top: auto; border: 0; border-top: 1px solid #bbb; }
.hdots { height: 6px; background: repeating-linear-gradient(90deg, #bbb 0 1px, transparent 1px 4px) 204px 2px / 22px 2px no-repeat; }
.desc { height: 98px; border: 1px solid #b8b4af; padding: 5px 5px; line-height: 17.500px; white-space: nowrap; }
.desc a { color: #1f1ff0; text-decoration: underline; }
.btns { display: flex; gap: 8px; padding: 7px 2px 0; }
.btns span { flex: 1; height: 28px; border: 1px solid #aaa6a1; border-radius: 3px; background: linear-gradient(#fff, #f0eeec); text-align: center; line-height: 26px; }
.gut { width: 28px; display: flex; align-items: center; padding-top: 9px; }
.gut svg { width: 28px; height: 40px; }
.view3d { width: 830px; height: 749px; }
.views { width: 336px; display: flex; flex-direction: column; }
.views .d-head { padding-right: 0; gap: 7px; }
.views .d-head svg { width: 21px; }
.typerow { height: 44px; display: flex; padding: 7px 0 0 3px; line-height: 26px; flex: none; }
.combo { width: 175px; height: 28px; margin-left: 9px; border: 1px solid #aaa6a1; border-radius: 3px; background: linear-gradient(#fff, #f0eeec); padding: 0 8px 0 4px; display: flex; align-items: center; justify-content: space-between; }
.cd { width: 10px; height: 6px; }
.zero { width: 100px; height: 28px; margin-left: 8px; border: 1px solid #aaa6a1; border-radius: 3px; background: linear-gradient(#fff, #f0eeec); text-align: center; }
.typerow > span:first-child { width: 41px; }
.vtree { height: 651px; flex: none; background: linear-gradient(#ddd, #ddd) 168px 0 / 1px 100% no-repeat #fff; border: 1px solid #b5b2ae; padding-top: 1px; }
.vtree p { height: 17.520px; line-height: 17.500px; display: flex; align-items: center; position: relative; padding-left: 54px; white-space: pre; }
.vtree p.cur { padding-left: 6px; font-weight: bold; background: linear-gradient(90deg, #fff 25px, #bcada3 25px); color: #111; }
.vtree .cur .ar { height: 7px; margin-right: 11px; }
.vtree .exp { padding-left: 34px; }
.vtree .exp .ar { width: 7px; height: 12px; margin-right: 13px; }
.vtree b { left: 171px; height: 17.500px; }
.vtree .cur b { font-weight: bold; }
.vtree .cb { height: 16.500px; }
.views .btns { padding-top: 7px; }
.views .btns span { flex: none; width: 106px; }

.handle { position: absolute; left: 0; top: 329px; width: 21px; height: 63px; background: #6e7e95; border-radius: 0 7px 7px 0; box-shadow: 2px 3px 0 #7b7b7b; }
.handle svg { width: 20px; height: 63px; }

.lx { position: absolute; left: 0; top: 851px; width: 1899px; height: 30px; background: linear-gradient(#eee, #bebebe); border-bottom: 1px solid #888; display: flex; align-items: center; overflow: hidden; color: #222; font: 19px "Noto Sans", sans-serif; }
.lxstart { width: 60px; height: 30px; background: linear-gradient(#8cc0e8, #17609c); padding-left: 15px; margin-right: 11px; }
.lxstart svg { width: 29px; height: 29px; }
.lxi { width: 28px; height: 28px; margin-right: 6.500px; }
.pager { width: 54px; height: 27px; display: flex; gap: 1px; margin-top: 2px; }
.pager i { width: 7px; background: #6fa5cc; border-bottom: 4px solid #487ba2; }
.pager em { flex: 1; background: #d3e3f2; border: 1px solid #fff; text-align: center; font: bold 11px/22px "Liberation Sans"; color: #eee; -webkit-text-stroke: .5px #aaa; }
.pager2 { width: 53px; height: 28px; background: #aca8a2; }
.task { display: flex; align-items: center; height: 30px; gap: 3px; flex: none; }
.task svg { width: 22px; height: 22px; }
.t1 { width: 189px; margin-left: 14px; }
.t2 { width: 185px; }
.act { width: 182px; margin-right: 9px; background: linear-gradient(#8b8b8b, #aaa); color: #eee; padding-left: 4px; gap: 1px; }
.act em { width: 26px; font: bold 12px "Liberation Sans"; color: #eee; -webkit-text-stroke: .4px #666; }
.t4 { width: 190px; }
.t4 svg { width: 26px; height: 26px; margin-right: -2px; }
.t5 { width: 188px; }
.tray { margin-left: auto; display: flex; align-items: center; width: 104px; flex: none; overflow: hidden; }
.tray svg { width: 27px; height: 20px; margin-right: 18px; }
.tray .pw { width: 20px; margin: 0 0 0 9px; }

.win { height: 50px; flex: none; background: #20262a; display: flex; color: #fff; }
.start { width: 60px; background: #2b2b2b; padding: 15px 0 0 20px; }
.start svg { width: 20px; height: 20px; }
.search { width: 360px; background: #f2f2f2; border: 1px solid #bbb; display: flex; align-items: center; color: #333; font-size: 18.500px; padding: 0 11px 0 14px; }
.q { margin-top: -2px; }
.mag { width: 20px; height: 20px; margin-right: 15px; }
.food { width: 78px; height: 42px; margin-left: auto; }
.ap { width: 51px; margin-right: 11px; padding: 10px 0 0 11px; border-bottom: 4px solid transparent; }
.ap svg { width: 29px; height: 29px; }
.ap.run { border-color: #76b9ed; }
.ap.tv { width: 64px; margin: 0; padding: 13px 0 0 20px; }
.ap.tv svg { width: 22px; height: 22px; }
.ap.hot { width: 61px; margin-right: 6px; padding-left: 15px; background-color: #4d5256; }
.ap.hot svg { width: 32px; height: 32px; }
.jj { font-size: 10px; fill: #fff; text-anchor: middle; }
.weather { margin-left: 496px; display: flex; align-items: center; font-size: 17.500px; }
.weather svg { width: 30px; height: 29px; margin-right: 10px; }
.weather span { margin-right: 11px; margin-top: -1px; }
.sys { display: flex; align-items: center; margin-left: auto; font-size: 15px; }
.sys svg { width: 20px; height: 20px; }
.sys .sp2 { width: 21px; margin-left: 8px; }
.sys .wf { width: 18px; margin-left: 11px; }
.eng { margin-left: 13px; }
.clock { width: 76px; margin-left: 16px; margin-top: -1px; display: flex; flex-direction: column; align-items: center; line-height: 23px; }
.sys .note { width: 32px; height: 32px; margin: 4px 14px 0 22px; }
.nn { font-size: 13px; font-weight: bold; fill: #fff; text-anchor: middle; }
.peek { width: 6px; height: 50px; border-left: 1px solid #666; }
```
FILE: app.js
```js
// Labels carry the width their slot has; tracking is tuned to fill it.
document.querySelectorAll('[data-w]').forEach(el => {
  const want = +el.dataset.w, n = el.textContent.length;
  el.style.width = 'max-content';
  const have = el.getBoundingClientRect().width;
  el.style.letterSpacing = ((want - have) / n) + 'px';
  el.style.width = want + 'px';
});

const NS = 'http://www.w3.org/2000/svg';
function line(parent, x1, y1, x2, y2) {
  const l = document.createElementNS(NS, 'line');
  l.setAttribute('x1', x1); l.setAttribute('y1', y1);
  l.setAttribute('x2', x2); l.setAttribute('y2', y2);
  parent.appendChild(l);
}

// 10 x 10 ground grid in perspective
const project = (u, v) => {
  const s = u + v, t = u - v, w = 1 - 0.0613 * s;
  return [1136.4 + 81.9 * t / w, 611 + 58.2 * s / w];
};
const grid = document.getElementById('grid');
for (let i = 0; i <= 10; i++) {
  const k = -1 + i / 5;
  line(grid, ...project(k, -1), ...project(k, 1));
  line(grid, ...project(-1, k), ...project(1, k));
}

// cloud of pose arrows: a dense core with a ragged rim
let seed = 7;
const rnd = () => (seed = (seed * 16807) % 2147483647) / 2147483647;
const poses = document.getElementById('poses');
for (let i = 0; i < 760; i++) {
  const a = rnd() * Math.PI * 2, d = rnd() * Math.PI * 2;
  const r = i < 640 ? Math.sqrt(rnd()) * .82 : .8 + rnd() * .25;
  const x = 1113 + Math.cos(a) * r * 21, y = 549 + Math.sin(a) * r * 16;
  line(poses, x, y, x + Math.cos(d) * 5, y + Math.sin(d) * 3.5);
}
line(poses, 1078, 551, 1082, 554);
line(poses, 1086, 559, 1096, 560);
line(poses, 1086, 541, 1096, 543);
```
